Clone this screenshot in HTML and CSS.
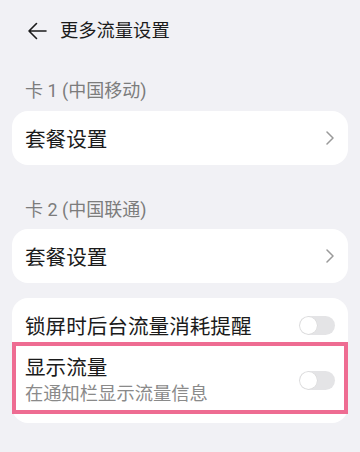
FILE: index.html
```html
<!DOCTYPE html>
<html lang="zh-CN">
<head>
<meta charset="utf-8">
<title>更多流量设置</title>
<link rel="stylesheet" href="styles.css">
</head>
<body>
<div class="page">
  <header class="header">
    <svg class="back" width="20" height="18" viewBox="0 0 20 18"><path d="M19 9H2M9.5 1.5L2 9l7.5 7.5" fill="none" stroke="#1b1b1b" stroke-width="1.6" stroke-linecap="round" stroke-linejoin="round"/></svg>
    <span class="title">更多流量设置</span>
  </header>

  <div class="label label-first">卡 1 (中国移动)</div>
  <div class="card row">
    <span class="row-text">套餐设置</span>
    <svg class="chev" width="8" height="14" viewBox="0 0 8 14"><path d="M1 1l6 6-6 6" fill="none" stroke="#9a9a9a" stroke-width="1.5" stroke-linecap="round" stroke-linejoin="round"/></svg>
  </div>

  <div class="label label-second">卡 2 (中国联通)</div>
  <div class="card row">
    <span class="row-text">套餐设置</span>
    <svg class="chev" width="8" height="14" viewBox="0 0 8 14"><path d="M1 1l6 6-6 6" fill="none" stroke="#9a9a9a" stroke-width="1.5" stroke-linecap="round" stroke-linejoin="round"/></svg>
  </div>

  <div class="card card-toggles">
    <div class="toggle-row">
      <span class="row-text">锁屏时后台流量消耗提醒</span>
      <span class="switch"><span class="knob"></span></span>
    </div>
    <div class="highlight">
      <div class="hl-text">
        <span class="row-text">显示流量</span>
        <span class="sub">在通知栏显示流量信息</span>
      </div>
      <span class="switch"><span class="knob"></span></span>
    </div>
  </div>
</div>
</body>
</html>
```

FILE: styles.css
```css
html, body {
  margin: 0;
  padding: 0;
  background: #f1f1f5;
}
body {
  font-family: "Noto Sans CJK SC", "Noto Sans", sans-serif;
  color: #1b1b1b;
}
.page {
  width: 360px;
  height: 452px;
  padding: 0 12px;
  box-sizing: border-box;
  overflow: hidden;
}
.header {
  height: 58px;
  display: flex;
  align-items: center;
  padding-left: 15px;
}
.back {
  display: block;
  margin-top: 3px;
}
.title {
  margin-left: 13px;
  font-size: 18.3px;
  line-height: 24px;
  color: #1b1b1b;
}
.label {
  font-family: Roboto, "Noto Sans CJK SC", sans-serif;
  font-size: 18px;
  line-height: 24px;
  color: #7c7c7c;
  padding-left: 13px;
}
.label-first {
  margin-top: 21px;
  margin-bottom: 8px;
}
.label-second {
  margin-top: 33px;
  margin-bottom: 7px;
}
.card {
  background: #ffffff;
  border-radius: 16px;
}
.row {
  height: 54px;
  display: flex;
  align-items: center;
  justify-content: space-between;
  padding: 0 14px 0 13px;
}
.row-text {
  font-size: 20.6px;
  line-height: 26px;
  color: #1b1b1b;
}
.chev {
  display: block;
}
.card-toggles {
  margin-top: 15px;
  padding-bottom: 9px;
}
.toggle-row {
  height: 44px;
  box-sizing: border-box;
  padding: 10px 13px 0 13px;
  display: flex;
  align-items: center;
  justify-content: space-between;
}
.switch {
  position: relative;
  width: 36px;
  height: 19px;
  border-radius: 10px;
  background: #e4e4e6;
  flex: none;
}
.knob {
  position: absolute;
  left: 1px;
  top: 1px;
  width: 17px;
  height: 17px;
  border-radius: 50%;
  background: #ffffff;
  box-shadow: 0 0 0 0.5px #d6d6d6;
}
.highlight {
  border: 4px solid #ee6c92;
  height: 72px;
  box-sizing: border-box;
  display: flex;
  align-items: center;
  justify-content: space-between;
  padding: 0 9px 0 9px;
}
.hl-text {
  display: flex;
  flex-direction: column;
  margin-top: 1px;
}
.sub {
  font-size: 18.3px;
  line-height: 24px;
  color: #8a8a8a;
  margin-top: 1px;
}
.highlight .switch {
  margin-top: 4px;
}
```
